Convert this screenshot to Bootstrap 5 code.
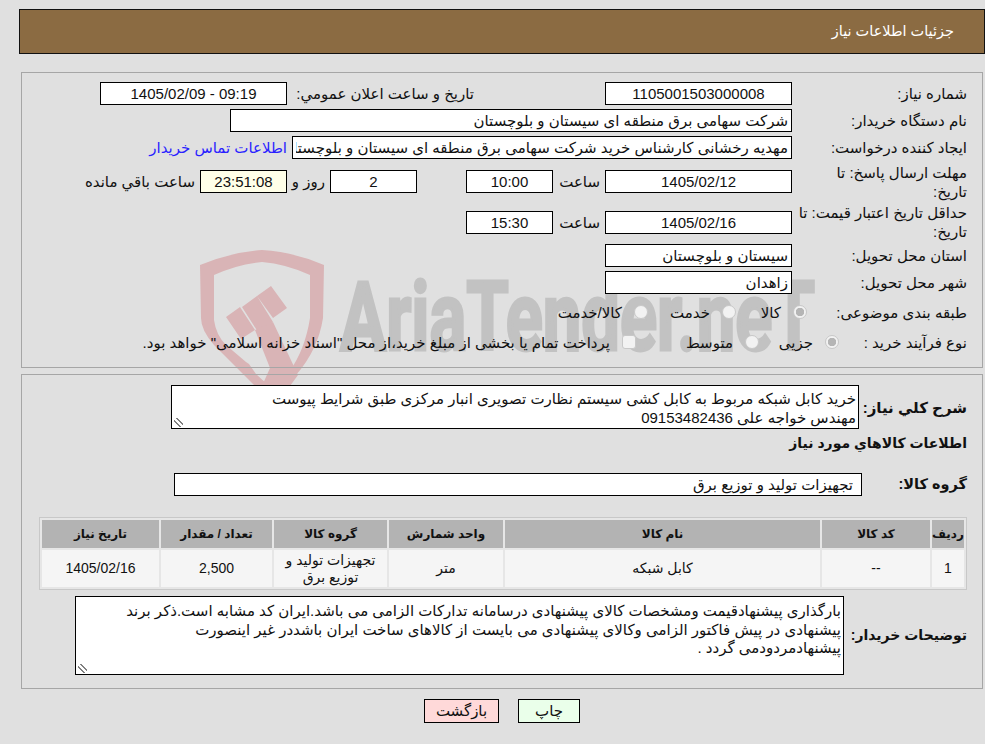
<!DOCTYPE html>
<html lang="fa" dir="rtl">
<head>
<meta charset="utf-8">
<title>جزئیات اطلاعات نیاز</title>
<link rel="stylesheet" href="https://cdn.jsdelivr.net/npm/bootstrap@5.3.0/dist/css/bootstrap.min.css">
<style>
html{background:#e0e0e0;height:100%}
body{background:transparent;height:100%;font-family:"Liberation Sans","DejaVu Sans",sans-serif;font-size:15px;line-height:19px;color:#111;overflow:hidden;position:relative}
.wmark{position:absolute;left:0;top:0;z-index:-1}
.shell{padding:9px 0 0 19px}
.headbar{height:45px;background:#8b6b42;border:1px solid #111;color:#fff;padding-right:30px;font-size:14.5px;margin-bottom:18px}
.pane{margin:0 2px;border:1px solid #a6a6a6;padding-right:15px;background:transparent}
.pane1{height:296px;padding-top:9px;margin-bottom:6px}
.pane2{height:315px;padding-top:10px}
.fld{height:23px;border:1px solid #000;border-radius:0;background:#fff;padding:0 3px;font-size:15px;line-height:21px;color:#111;min-height:0;box-shadow:none;font-family:inherit}
.fld:focus{border-color:#000;box-shadow:none}
.w187{width:187px;flex:none}.w87{width:87px;flex:none}.w562{width:562px;flex:none}.w500{width:500px;flex:none}
.lab{width:175px;flex:none;padding-left:6px}
.labr8{width:160px;flex:none}
.labr9{width:128px;flex:none}
.r1{height:23px}
.r2,.r3{height:23px;margin-top:4px}
.r4{height:37px;margin-top:4px}
.r5{height:40px;margin-top:2px}
.r6{height:23px;margin-top:2px}
.r7{height:23px;margin-top:4px}
.r8{height:22px;margin-top:7px}
.r9{height:22px;margin-top:8px}
.gapa{width:131px;flex:none}
.sub1{width:187px;flex:none}
.sub2{width:52px;flex:none;padding-right:5px}
.sub3{width:49px;flex:none}
.sub4{width:43px;flex:none;padding-right:5px}
.remain{background:#ffffe8}
.sub5{padding-right:5px;white-space:nowrap}
.lnk{color:#2a1fff;text-decoration:none;padding-right:5px;white-space:nowrap}
.opt{flex:none;gap:12px}
.o1{width:71px}.o2{width:88px}.o3{width:130px}
.o4{width:80px}.o5{width:123px}
.rad{width:14px;height:14px;margin:0;flex:none;appearance:none;border:1px solid #c8c8c8;border-radius:50%;background:#f2f2f2;opacity:1}
.rad:checked{background:radial-gradient(circle,#b5b5b5 0 4px,#f2f2f2 4.5px)}
.chk{border-radius:3px}
.blab{width:108px;flex:none;font-weight:700;font-size:15px}
.blab2{width:105px;flex:none;font-weight:700;font-size:14.5px}
.blab3{width:123px;flex:none;font-weight:700;font-size:14px;white-space:nowrap}
.tarea{width:688px;height:44px;border:1px solid #000;border-radius:0;background:#fff;padding:4px 2px 0;font-family:inherit;font-size:15px;line-height:18.5px;color:#111;overflow:hidden;display:block;white-space:pre;outline:none}
.tarea::-webkit-resizer{background:linear-gradient(45deg,transparent 30%,#808080 30% 44%,transparent 44% 56%,#808080 56% 70%,transparent 70%) left 2px bottom 1px/9px 9px no-repeat}
.tarea2{width:769px;height:79px;padding-top:5px}
.hd2{font-weight:700;font-size:14px;height:20px;margin-top:5px}
.grp{width:688px;flex:none;padding-right:8px}
.rowg{margin-top:19px}
.tblw{margin:21px 0 6px;width:928px}
table.ttab{width:928px;table-layout:fixed;border-collapse:separate;border-spacing:2px;border:1px solid #c8c8c8;margin:0;background:#e6e6e6;font-size:14px}
table.ttab th{background:#b3b3b3;height:28px;padding:0;font-size:12px;text-align:center;vertical-align:middle;border:0;color:#111}
table.ttab td{background:#f5f5f5;height:37px;padding:0 8px;text-align:center;vertical-align:middle;border:0;line-height:17px;color:#111}
.c1{width:32px}.c2{width:108px}.c3{width:315px}.c4{width:114px}.c5{width:113px}.c6{width:111px}.c7{width:117px}
.btnrow{gap:19px;margin-top:10px}
.btnp{height:24px;border:1px solid #000;border-radius:0;padding:0;font-size:15px;line-height:20px;color:#111;font-family:inherit}
.bprint{width:62px;background:#eaffea}
.bback{width:75px;background:#ffd9d9}
</style>
</head>
<body>
<svg class="wmark" width="985" height="744" viewBox="0 0 985 744" aria-hidden="true">
  <path fill="#d9b4b6" fill-rule="evenodd" d="M200 265 Q232 252 262 250 Q294 252 324 265 L323 318 Q318 350 296 375 L289 386 L255 386 L214 345 Q201 330 201 318 Z M214 275 L214 320 Q216 335 226 345 L246 362 L249 364 L256 374 Q262 380 270 386 L289 372 Q305 350 310 318 L310 275 Q286 264 262 262 Q238 264 214 275 Z"/>
  <path fill="#d9b4b6" d="M226 317 L240 307 L255 330 L241 339 Z M242 307 L257 296 L273 322 L258 332 Z M257 296 L271 286 L287 308 L273 318 Z"/>
  <path fill="#d9b4b6" d="M255 330 L273 322 L298 375 L290 386 L262 386 L270 368 Z"/>
  <text x="340" y="350" fill="#c2c2c2" stroke="#c2c2c2" stroke-width="3" font-family="Roboto,'Open Sans',sans-serif" font-weight="700" font-size="96" textLength="475" lengthAdjust="spacingAndGlyphs" direction="ltr" unicode-bidi="bidi-override">AriaTender.neT</text>
</svg>
<div class="shell">
  <div class="headbar d-flex align-items-center">جزئیات اطلاعات نیاز</div>

  <div class="pane pane1">
    <div class="r1 d-flex align-items-center">
      <div class="lab">شماره نیاز:</div>
      <input class="form-control fld w187 text-center" readonly value="1105001503000008">
      <div class="gapa"></div>
      <div class="sub1">تاریخ و ساعت اعلان عمومي:</div>
      <input class="form-control fld w187 text-center" readonly value="09:19 - 1405/02/09">
    </div>
    <div class="r2 d-flex align-items-center">
      <div class="lab">نام دستگاه خریدار:</div>
      <input class="form-control fld w562" readonly value="شرکت سهامی برق منطقه ای سیستان و بلوچستان">
    </div>
    <div class="r3 d-flex align-items-center">
      <div class="lab">ایجاد کننده درخواست:</div>
      <input class="form-control fld w500" readonly value="مهدیه رخشانی کارشناس خرید شرکت سهامی برق منطقه ای سیستان و بلوچستان">
      <a class="lnk" href="#">اطلاعات تماس خریدار</a>
    </div>
    <div class="r4 d-flex align-items-center">
      <div class="lab">مهلت ارسال پاسخ: تا<br>تاریخ:</div>
      <input class="form-control fld w187 text-center" readonly value="1405/02/12">
      <div class="sub2">ساعت</div>
      <input class="form-control fld w87 text-center" readonly value="10:00">
      <div class="sub3"></div>
      <input class="form-control fld w87 text-center" readonly value="2">
      <div class="sub4">روز و</div>
      <input class="form-control fld w87 text-center remain" readonly value="23:51:08">
      <div class="sub5">ساعت باقي مانده</div>
    </div>
    <div class="r5 d-flex align-items-center">
      <div class="lab">حداقل تاریخ اعتبار قیمت: تا تاریخ:</div>
      <input class="form-control fld w187 text-center" readonly value="1405/02/16">
      <div class="sub2">ساعت</div>
      <input class="form-control fld w87 text-center" readonly value="15:30">
    </div>
    <div class="r6 d-flex align-items-center">
      <div class="lab">استان محل تحویل:</div>
      <input class="form-control fld w187" readonly value="سیستان و بلوچستان">
    </div>
    <div class="r7 d-flex align-items-center">
      <div class="lab">شهر محل تحویل:</div>
      <input class="form-control fld w187" readonly value="زاهدان">
    </div>
    <div class="r8 d-flex align-items-center">
      <div class="labr8">طبقه بندی موضوعی:</div>
      <div class="opt o1 d-flex align-items-center"><input class="rad" type="radio" name="t" disabled checked><span>کالا</span></div>
      <div class="opt o2 d-flex align-items-center"><input class="rad" type="radio" name="t" disabled><span>خدمت</span></div>
      <div class="opt o3 d-flex align-items-center"><input class="rad" type="radio" name="t" disabled><span>کالا/خدمت</span></div>
    </div>
    <div class="r9 d-flex align-items-center">
      <div class="labr9">نوع فرآیند خرید :</div>
      <div class="opt o4 d-flex align-items-center"><input class="rad" type="radio" name="p" disabled checked><span>جزیی</span></div>
      <div class="opt o5 d-flex align-items-center"><input class="rad" type="radio" name="p" disabled><span>متوسط</span></div>
      <div class="opt d-flex align-items-center"><input class="rad chk" type="checkbox" disabled><span>پرداخت تمام یا بخشی از مبلغ خرید،از محل "اسناد خزانه اسلامی" خواهد بود.</span></div>
    </div>
  </div>

  <div class="pane pane2">
    <div class="d-flex align-items-center">
      <div class="blab">شرح كلي نياز:</div>
      <textarea class="tarea" readonly>خرید کابل شبکه مربوط به کابل کشی سیستم نظارت تصویری انبار مرکزی طبق شرایط پیوست
مهندس خواجه علی 09153482436</textarea>
    </div>
    <div class="hd2">اطلاعات كالاهاي مورد نياز</div>
    <div class="rowg d-flex align-items-center">
      <div class="blab2">گروه کالا:</div>
      <input class="form-control fld grp" readonly value="تجهیزات تولید و توزیع برق">
    </div>
    <div class="tblw">
      <table class="ttab">
        <thead><tr>
          <th class="c1">ردیف</th><th class="c2">کد کالا</th><th class="c3">نام کالا</th><th class="c4">واحد شمارش</th><th class="c5">گروه کالا</th><th class="c6">تعداد / مقدار</th><th class="c7">تاریخ نیاز</th>
        </tr></thead>
        <tbody><tr>
          <td class="px-0">1</td><td>--</td><td>کابل شبکه</td><td>متر</td><td>تجهیزات تولید و توزیع برق</td><td>2,500</td><td>1405/02/16</td>
        </tr></tbody>
      </table>
    </div>
    <div class="d-flex align-items-center">
      <div class="blab3">توضیحات خریدار:</div>
      <textarea class="tarea tarea2" readonly>بارگذاری پیشنهادقیمت ومشخصات کالای پیشنهادی درسامانه تدارکات الزامی می باشد.ایران کد مشابه است.ذکر برند
پیشنهادی در پیش فاکتور الزامی وکالای پیشنهادی می بایست از کالاهای ساخت ایران باشددر غیر اینصورت
پیشنهادمردودمی گردد .</textarea>
    </div>
  </div>

  <div class="btnrow d-flex justify-content-center">
    <button type="button" class="btn btnp bprint">چاپ</button>
    <button type="button" class="btn btnp bback">بازگشت</button>
  </div>
</div>
<script src="https://cdn.jsdelivr.net/npm/bootstrap@5.3.0/dist/js/bootstrap.bundle.min.js"></script>
</body>
</html>
